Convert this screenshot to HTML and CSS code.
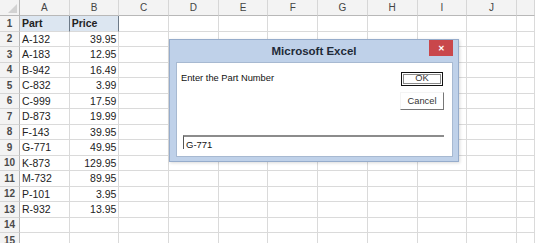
FILE: index.html
```html
<!DOCTYPE html>
<html lang="en">
<head>
    <meta charset="UTF-8">
    <title>Microsoft Excel - Input Box</title>
    <link rel="stylesheet" href="styles.css">
</head>
<body>
    <div class="sheet" id="sheet"></div>

    <div class="dialog">
        <div class="dialog-title">
            <span class="dialog-caption">Microsoft Excel</span>
            <span class="close-btn">&#x2715;</span>
        </div>
        <div class="dialog-body">
            <div class="prompt-row">
                <div class="prompt">Enter the Part Number</div>
                <div class="buttons">
                    <div class="btn btn-ok"><span>OK</span></div>
                    <div class="btn btn-cancel">Cancel</div>
                </div>
            </div>
            <div class="answer">G-771</div>
        </div>
    </div>

    <script>
        const sheet = document.getElementById('sheet');
        // last column is only partly on screen, its letter falls outside
        const columns = ['A', 'B', 'C', 'D', 'E', 'F', 'G', 'H', 'I', 'J', ''];
        const parts = [
            ['A-132', '39.95'], ['A-183', '12.95'], ['B-942', '16.49'],
            ['C-832', '3.99'], ['C-999', '17.59'], ['D-873', '19.99'],
            ['F-143', '39.95'], ['G-771', '49.95'], ['K-873', '129.95'],
            ['M-732', '89.95'], ['P-101', '3.95'], ['R-932', '13.95']
        ];

        function cell(cls, text) {
            const div = document.createElement('div');
            div.className = cls;
            if (text) div.textContent = text;
            sheet.appendChild(div);
        }

        // header row
        cell('corner');
        columns.forEach(c => cell('col-head', c));

        for (let r = 1; r <= 15; r++) {
            cell('row-head', r);
            columns.forEach((c, i) => {
                if (r === 1 && i < 2) {
                    cell('cell title-cell', i === 0 ? 'Part' : 'Price');
                } else if (r >= 2 && r <= 13 && i === 0) {
                    cell('cell', parts[r - 2][0]);
                } else if (r >= 2 && r <= 13 && i === 1) {
                    cell('cell num', parts[r - 2][1]);
                } else {
                    cell('cell');
                }
            });
        }
    </script>
</body>
</html>
```

FILE: styles.css
```css
body {
    margin: 0;
    font-family: "Liberation Sans", Arial, sans-serif;
    background-color: #fff;
    overflow: hidden;
}
.sheet {
    display: grid;
    grid-template-columns: 20px repeat(10, 49.7px) 18px;
    grid-template-rows: 16px;
    grid-auto-rows: 15.5px;
    font-size: 10.5px;
    color: #222;
}
.corner,
.col-head,
.row-head {
    background-color: #f3f3f3;
    color: #444;
    box-sizing: border-box;
    display: flex;
    align-items: center;
    justify-content: center;
}
.corner {
    position: relative;
    border-right: 1px solid #b8b8b8;
    border-bottom: 1px solid #b8b8b8;
}
.corner::after {
    content: "";
    position: absolute;
    right: 2px;
    bottom: 2px;
    border-left: 9px solid transparent;
    border-bottom: 9px solid #d2d2d2;
}
.col-head {
    font-size: 10px;
    border-right: 1px solid #d6d6d6;
    border-bottom: 1px solid #b8b8b8;
}
.row-head {
    border-right: 1px solid #b8b8b8;
    border-bottom: 1px solid #d6d6d6;
    font-size: 10px;
    font-weight: bold;
    color: #4a4a4a;
}
.cell {
    box-sizing: border-box;
    border-right: 1px solid #dadada;
    border-bottom: 1px solid #dadada;
    padding: 0 2px;
    display: flex;
    align-items: center;
    white-space: nowrap;
    overflow: hidden;
}
.cell.num {
    justify-content: flex-end;
}
.title-cell {
    background-color: #dce6f1;
    font-weight: bold;
    border-right-color: #6d7a88;
}

/* input box */
.dialog {
    position: absolute;
    left: 169px;
    top: 39px;
    width: 290px;
    height: 123px;
    box-sizing: border-box;
    background-color: #bfd1e9;
    border: 1px solid #96accb;
    display: flex;
    flex-direction: column;
    box-shadow: 1px 1px 3px rgba(0,0,0,0.15);
}
.dialog-title {
    position: relative;
    height: 22px;
    display: flex;
    align-items: center;
    justify-content: center;
}
.dialog-caption {
    font-size: 11.5px;
    font-weight: bold;
    color: #1e2a38;
}
.close-btn {
    position: absolute;
    top: 0;
    right: 5px;
    width: 24px;
    height: 16px;
    background-color: #c9474b;
    color: #fff;
    font-size: 8px;
    font-weight: bold;
    display: flex;
    align-items: center;
    justify-content: center;
}
.dialog-body {
    flex-grow: 1;
    margin: 0 5px 4px 6px;
    background-color: #fff;
    border: 1px solid #a7b9d1;
    padding: 9px 8px 0 4px;
    font-size: 9.3px;
    color: #111;
}
.prompt-row {
    display: flex;
    justify-content: space-between;
    height: 38px;
}
.prompt {
    padding-top: 1px;
}
.buttons {
    display: flex;
    flex-direction: column;
    align-items: flex-end;
    gap: 6px;
}
.btn {
    box-sizing: border-box;
    display: flex;
    align-items: center;
    justify-content: center;
    color: #333;
}
.btn-ok {
    width: 42px;
    height: 14px;
    margin-right: 1px;
    border: 1px solid #111;
    padding: 1px;
}
.btn-ok span {
    flex-grow: 1;
    height: 100%;
    border: 1px solid #8a8a8a;
    box-sizing: border-box;
    display: flex;
    align-items: center;
    justify-content: center;
    line-height: 1;
}
.btn-cancel {
    width: 44px;
    height: 18px;
    border-right: 1px solid #777;
    border-bottom: 1px solid #777;
    border-top: 1px solid #f4f4f4;
    border-left: 1px solid #f4f4f4;
}
.answer {
    margin: 25px 0 0 2px;
    height: 14px;
    box-sizing: border-box;
    border-top: 2px solid #8c8c8c;
    border-left: 1px solid #555;
    padding: 2px 2px 0;
    font-size: 9.5px;
    line-height: 11px;
}
```
